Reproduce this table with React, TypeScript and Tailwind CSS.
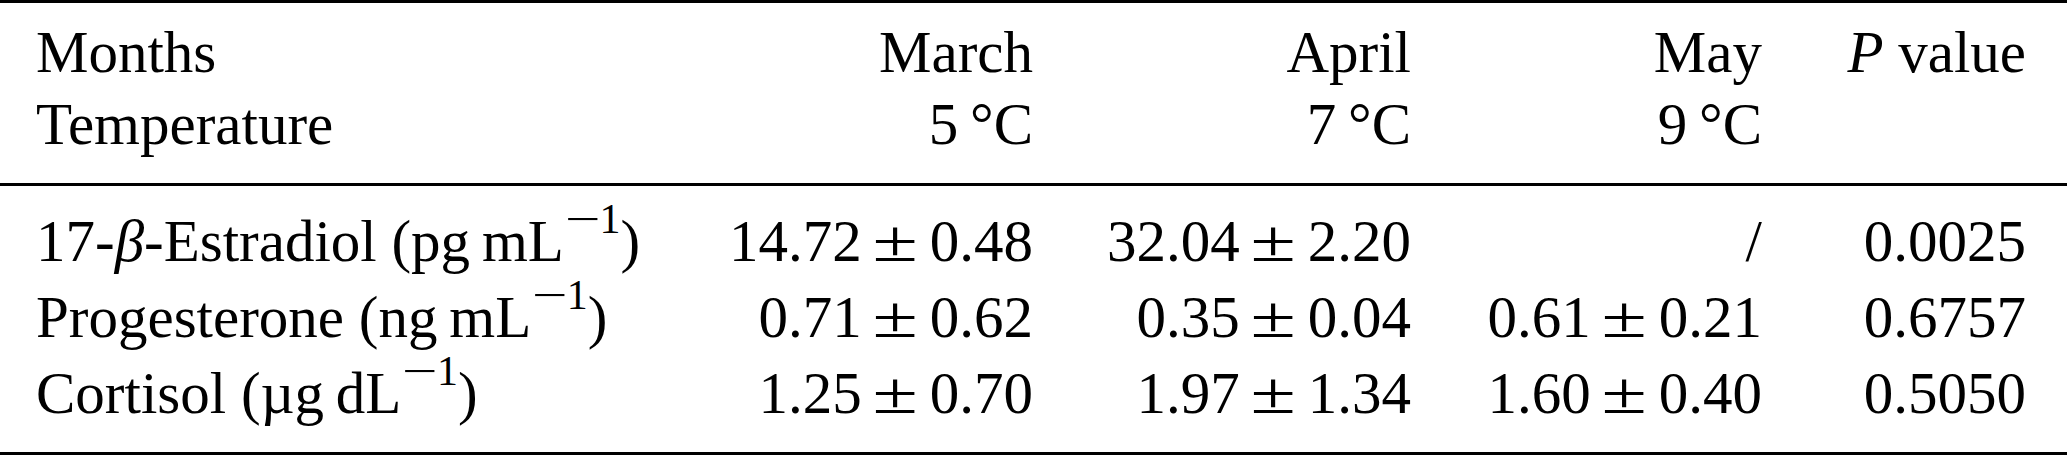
import React from "react";

const row = "grid grid-cols-[663px_334px_378px_351px_264px] pl-[36px] pr-[40px]";

function Sup() {
  return (
    <span className="text-[42px] leading-[0] align-[28px] ml-[2px]">
      <span className="inline-block scale-x-[1.5] mx-[5px]">−</span>1
    </span>
  );
}

function PM({ a, b }: { a: string; b: string }) {
  return (
    <span>
      {a}
      <span className="inline-block w-[68px] pr-[2px] text-center">
        <span className="inline-block scale-x-[1.4]">±</span>
      </span>
      {b}
    </span>
  );
}

export default function App() {
  const data: { label: React.ReactNode; v: React.ReactNode[]; p: string }[] = [
    {
      label: (
        <>
          17-<i>β</i>-Estradiol (pg{"\u2009"}mL<Sup />)
        </>
      ),
      v: [<PM a="14.72" b="0.48" />, <PM a="32.04" b="2.20" />, "/"],
      p: "0.0025",
    },
    {
      label: (
        <>
          Progesterone (ng{"\u2009"}mL<Sup />)
        </>
      ),
      v: [<PM a="0.71" b="0.62" />, <PM a="0.35" b="0.04" />, <PM a="0.61" b="0.21" />],
      p: "0.6757",
    },
    {
      label: (
        <>
          Cortisol (µg{"\u2009"}dL<Sup />)
        </>
      ),
      v: [<PM a="1.25" b="0.70" />, <PM a="1.97" b="1.34" />, <PM a="1.60" b="0.40" />],
      p: "0.5050",
    },
  ];

  return (
    <div className="w-[2067px] h-[455px] overflow-hidden bg-white font-['Liberation_Serif',serif] text-[59px] text-black whitespace-nowrap">
      <div className="h-[3px] bg-black" />
      <div className="pt-[13px] pb-[23px] leading-[72px]">
        <div className={row}>
          <div>Months</div>
          <div className="text-right">March</div>
          <div className="text-right">April</div>
          <div className="text-right">May</div>
          <div className="text-right">
            <i>P</i> value
          </div>
        </div>
        <div className={row}>
          <div>Temperature</div>
          <div className="text-right">5{"\u2009"}°C</div>
          <div className="text-right">7{"\u2009"}°C</div>
          <div className="text-right">9{"\u2009"}°C</div>
          <div />
        </div>
      </div>
      <div className="h-[3px] bg-black" />
      <div className="pt-[17px] pb-[21px] leading-[76px]">
        {data.map((d, i) => (
          <div key={i} className={row}>
            <div>{d.label}</div>
            <div className="text-right">{d.v[0]}</div>
            <div className="text-right">{d.v[1]}</div>
            <div className="text-right">{d.v[2]}</div>
            <div className="text-right">{d.p}</div>
          </div>
        ))}
      </div>
      <div className="h-[3px] bg-black" />
    </div>
  );
}
